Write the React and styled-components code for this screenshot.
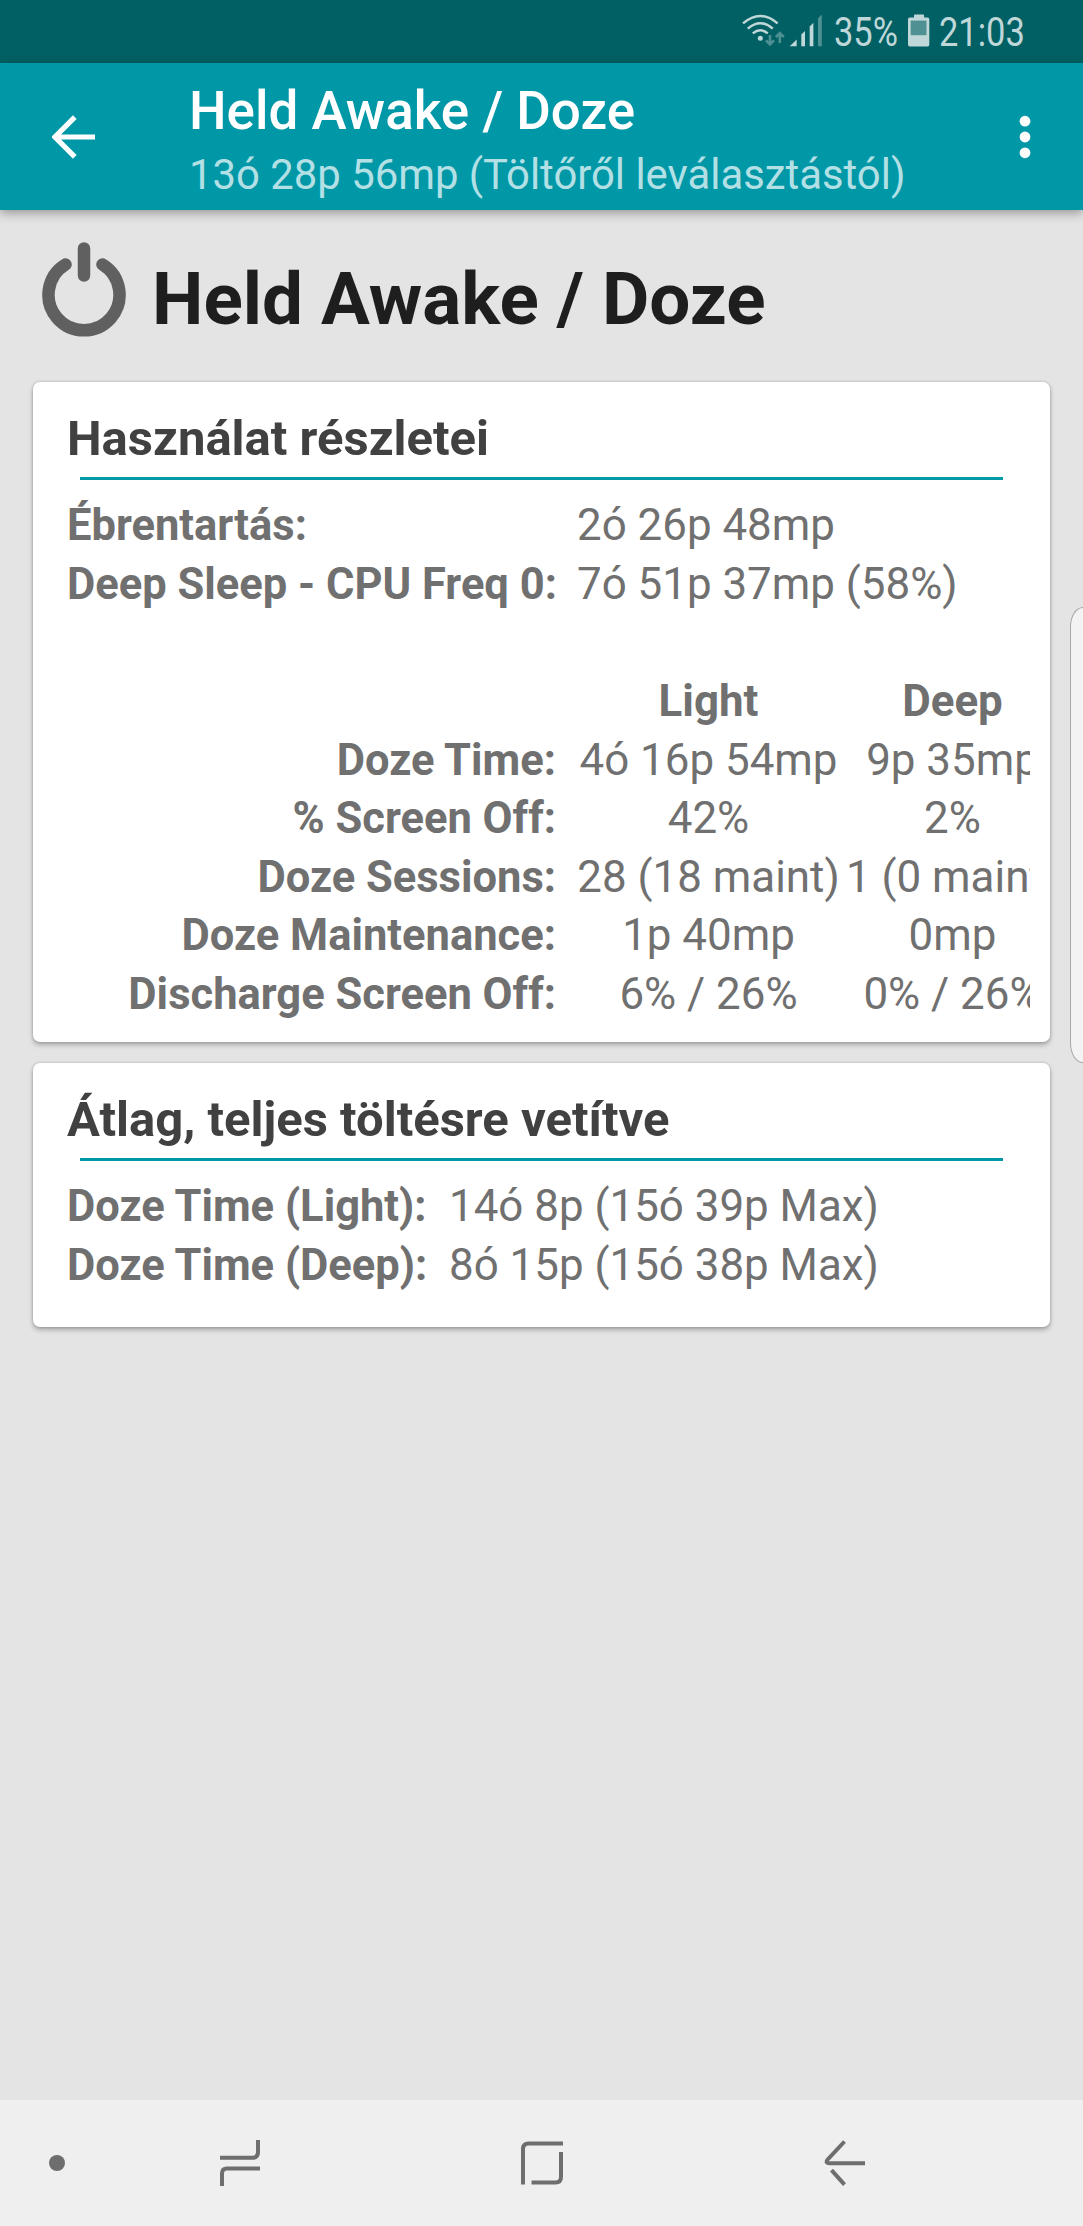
import React from "react";
import styled, { createGlobalStyle } from "styled-components";

const COLOR = {
  STATUS: "#006064",
  PRIMARY: "#0097a7",
  BACKGROUND: "#e4e4e4",
  NAV: "#efefef",
  TEXT: "#707070",
  STATUS_ICON: "#bfd7d8",
  STATUS_DIM: "#4f9093",
};

const summary = [
  ["Ébrentartás:", "2ó 26p 48mp"],
  ["Deep Sleep - CPU Freq 0:", "7ó 51p 37mp (58%)"],
];

const dozeRows = [
  ["Doze Time:", "4ó 16p 54mp", "9p 35mp"],
  ["% Screen Off:", "42%", "2%"],
  ["Doze Sessions:", "28 (18 maint)", "1 (0 maint)"],
  ["Doze Maintenance:", "1p 40mp", "0mp"],
  ["Discharge Screen Off:", "6% / 26%", "0% / 26%"],
];

const averages = [
  ["Doze Time (Light):", "14ó 8p (15ó 39p Max)"],
  ["Doze Time (Deep):", "8ó 15p (15ó 38p Max)"],
];

const StatusIcons = () => (
  <svg width="84" height="36" viewBox="740 12 84 36">
    <g fill="none" stroke={COLOR.STATUS_ICON} strokeWidth="2.5">
      <path d="M743 23.4Q760.3 8.6 777.6 23.4" />
      <path d="M747.8 28.6Q760.3 17.8 772.8 28.6" />
      <path d="M752.8 33.4Q760.3 27.2 767.8 33.4" />
    </g>
    <circle cx="760.3" cy="38.2" r="2.5" fill={COLOR.STATUS_ICON} />
    <g fill="none" stroke={COLOR.STATUS_DIM} strokeWidth="2.6">
      <path d="M770 35v9M766 40.4l4 4 4-4" />
      <path d="M779.8 43v-9M775.8 37.2l4-4 4 4" />
    </g>
    <g fill={COLOR.STATUS_ICON}>
      <path d="M789.7 46.3l7-6.8v6.8z" />
      <path d="M801.3 46.3V34.5l3.7-3.6v15.4z" />
      <path d="M809.7 46.3V26.4l3.7-3.7v23.6z" />
    </g>
    <path d="M818 46.3V18.2l3.8-3.7v31.8z" fill={COLOR.STATUS_DIM} />
  </svg>
);

const BatteryIcon = () => (
  <svg width="22" height="34" viewBox="0 0 22 34">
    <path
      d="M6 3V1.6Q6 0.5 7.1 0.5H15Q16.1 0.5 16.1 1.6V3.5H19.5Q21.3 3.5 21.3 5.3V30.7Q21.3 32.5 19.5 32.5H1.8Q0 32.5 0 30.7V5.3Q0 3.5 1.8 3.5H6z"
      fill={COLOR.STATUS_ICON}
    />
    <rect x="2.7" y="6.6" width="15.8" height="14.6" fill={COLOR.STATUS_DIM} />
  </svg>
);

const ArrowIcon = () => (
  <svg width="44" height="44" viewBox="0 0 44 44">
    <path
      d="M43 22H5M22.8 2.2L3 22l19.8 19.8"
      fill="none"
      stroke="#fff"
      strokeWidth="5.2"
    />
  </svg>
);

const MoreIcon = () => (
  <svg width="12" height="44" viewBox="0 0 12 44" fill="#fff">
    <circle cx="6" cy="6.2" r="5.4" />
    <circle cx="6" cy="22" r="5.4" />
    <circle cx="6" cy="37.8" r="5.4" />
  </svg>
);

const PowerIcon = () => (
  <svg width="84" height="96" viewBox="0 0 84 96">
    <g fill="none" stroke="#606060" strokeWidth="12.5" strokeLinecap="round">
      <path d="M23.5 23.5A35.5 35.5 0 1 0 60.5 23.5" />
      <path d="M42 7.5V34.5" />
    </g>
  </svg>
);

const RecentsIcon = () => (
  <svg width="42" height="48" viewBox="0 0 42 48">
    <path d="M1 18.8H33.5Q39 18.8 39 13.3V1M3 47V34.5Q3 29.4 8 29.4H41" />
  </svg>
);

const HomeIcon = () => (
  <svg width="44" height="46" viewBox="0 0 44 46">
    <path d="M3 44.5V9Q3 3.5 8.5 3.5H43M41 12V37Q41 42.5 35.5 42.5H11.5" />
  </svg>
);

const NavBackIcon = () => (
  <svg width="42" height="48" viewBox="0 0 42 48">
    <path d="M41 24.3H5.5Q1.3 24.3 3.3 20.9L20.5 2.5M7.5 31.2L20.5 45.7" />
  </svg>
);

const App = () => {
  return (
    <Screen>
      <GlobalStyle />
      <StatusBar>
        <StatusIcons />
        <StatusText $width={64} $left={10}>
          35%
        </StatusText>
        <BatterySlot>
          <BatteryIcon />
        </BatterySlot>
        <StatusText $width={86} $left={9}>
          21:03
        </StatusText>
      </StatusBar>
      <AppBar>
        <ArrowIcon />
        <Titles>
          <Title>Held Awake / Doze</Title>
          <Subtitle>13ó 28p 56mp (Töltőről leválasztástól)</Subtitle>
        </Titles>
        <MoreIcon />
      </AppBar>
      <Content>
        <Heading>
          <PowerIcon />
          <HeadingText>Held Awake / Doze</HeadingText>
        </Heading>
        <Card $height={660}>
          <CardTitle>Használat részletei</CardTitle>
          <Divider />
          <Table $label={489}>
            {summary.map(([label, value]) => (
              <Row key={label}>
                <Label>{label}</Label>
                <Value>{value}</Value>
              </Row>
            ))}
            <Row />
            <Row>
              <Label />
              <Cell $bold>Light</Cell>
              <Cell $bold $deep>
                Deep
              </Cell>
            </Row>
            {dozeRows.map(([label, light, deep]) => (
              <Row key={label}>
                <Label $right>{label}</Label>
                <Cell>{light}</Cell>
                <Cell $deep>{deep}</Cell>
              </Row>
            ))}
          </Table>
        </Card>
        <Card $height={264}>
          <CardTitle>Átlag, teljes töltésre vetítve</CardTitle>
          <Divider />
          <Table $label={361}>
            {averages.map(([label, value]) => (
              <Row key={label}>
                <Label>{label}</Label>
                <Value>{value}</Value>
              </Row>
            ))}
          </Table>
        </Card>
      </Content>
      <NavBar>
        <Dot />
        <RecentsIcon />
        <HomeIcon />
        <NavBackIcon />
      </NavBar>
      <EdgeHandle />
    </Screen>
  );
};

const GlobalStyle = createGlobalStyle`
  body {
    margin: 0;
    font-family: Roboto, "Noto Sans", sans-serif;
    background-color: ${COLOR.BACKGROUND};
  }

  svg {
    display: block;
    flex-shrink: 0;
  }
`;

const Screen = styled.div`
  position: relative;
  width: 1083px;
  height: 2226px;
  overflow: hidden;
  display: flex;
  flex-direction: column;
  box-sizing: border-box;
`;

const StatusBar = styled.div`
  height: 63px;
  flex-shrink: 0;
  box-sizing: border-box;
  padding: 0 58px 4px 0;
  display: flex;
  justify-content: flex-end;
  align-items: center;
  background-color: ${COLOR.STATUS};
`;

const StatusText = styled.div`
  width: ${({ $width }) => $width}px;
  margin-left: ${({ $left }) => $left}px;
  font-size: 41px;
  line-height: 48px;
  padding-top: 4px;
  white-space: nowrap;
  color: ${COLOR.STATUS_ICON};
  transform: scaleX(0.84);
  transform-origin: left;
`;

const BatterySlot = styled.div`
  margin-left: 10px;
  padding-top: 3px;
`;

const AppBar = styled.div`
  position: relative;
  height: 147px;
  flex-shrink: 0;
  box-sizing: border-box;
  padding: 0 52px;
  display: flex;
  align-items: center;
  background-color: ${COLOR.PRIMARY};
  box-shadow: 0 3px 10px rgba(0, 0, 0, 0.35);
`;

const Titles = styled.div`
  flex: 1;
  align-self: flex-start;
  margin-left: 93px;
  padding-top: 17px;
  display: flex;
  flex-direction: column;
  white-space: nowrap;
`;

const Title = styled.div`
  font-size: 53px;
  font-weight: 500;
  line-height: 62px;
  color: #fff;
`;

const Subtitle = styled.div`
  font-size: 41.85px;
  line-height: 65px;
  color: #b3e0e5;
`;

const Content = styled.div`
  flex: 1;
  padding: 0 33px;
`;

const Heading = styled.div`
  height: 172px;
  box-sizing: border-box;
  padding: 31px 0 0 9px;
  display: flex;
  align-items: flex-start;
`;

const HeadingText = styled.div`
  margin: 16px 0 0 26px;
  font-size: 72.8px;
  font-weight: 700;
  line-height: 84px;
  white-space: nowrap;
  color: #1e1e1e;
`;

const Card = styled.div`
  height: ${({ $height }) => $height}px;
  margin-bottom: 21px;
  box-sizing: border-box;
  padding: 27px 20px 0 34px;
  border-radius: 7px;
  background-color: #fff;
  box-shadow: 0 3px 5px rgba(0, 0, 0, 0.26), 0 0 3px rgba(0, 0, 0, 0.2);
`;

const CardTitle = styled.div`
  font-size: 49px;
  font-weight: 700;
  line-height: 60px;
  white-space: nowrap;
  color: #414141;
`;

const Divider = styled.div`
  height: 3px;
  margin: 8px 27px 0 13px;
  background-color: ${COLOR.PRIMARY};
`;

const Table = styled.div`
  --label: ${({ $label }) => $label}px;
  margin-top: 15px;
  overflow: hidden;
`;

const Row = styled.div`
  height: 58.65px;
  display: flex;
  align-items: baseline;
  font-size: 43.9px;
  line-height: 60px;
  white-space: nowrap;
  color: ${COLOR.TEXT};
`;

const Label = styled.div`
  width: var(--label);
  flex-shrink: 0;
  font-size: 43.5px;
  font-weight: 700;
  text-align: ${({ $right }) => ($right ? "right" : "left")};
`;

const Value = styled.div`
  margin-left: 21px;
`;

const Cell = styled.div`
  width: ${({ $deep }) => ($deep ? 220 : 264)}px;
  flex-shrink: 0;
  margin-left: ${({ $deep }) => ($deep ? 2 : 20.5)}px;
  font-weight: ${({ $bold }) => ($bold ? 700 : 400)};
  text-align: center;
`;

const NavBar = styled.div`
  height: 126px;
  flex-shrink: 0;
  display: flex;
  align-items: center;
  background-color: ${COLOR.NAV};

  svg {
    fill: none;
    stroke: #6e6e6e;
    stroke-width: 4;
  }

  svg:nth-of-type(1) {
    margin-left: 153.5px;
  }

  svg:nth-of-type(2) {
    margin-left: 259px;
  }

  svg:nth-of-type(3) {
    margin-left: 260px;
  }
`;

const Dot = styled.div`
  width: 16px;
  height: 16px;
  margin-left: 49px;
  border-radius: 50%;
  background-color: #6e6e6e;
`;

// edge panel handle, sits over the page
const EdgeHandle = styled.div`
  position: absolute;
  top: 607px;
  right: -2px;
  width: 15px;
  height: 456px;
  box-sizing: border-box;
  border: 1px solid #a8a8a8;
  border-right: none;
  border-radius: 13px 0 0 13px / 20px 0 0 20px;
  background-color: #f3f3f3;
`;

export default App;
